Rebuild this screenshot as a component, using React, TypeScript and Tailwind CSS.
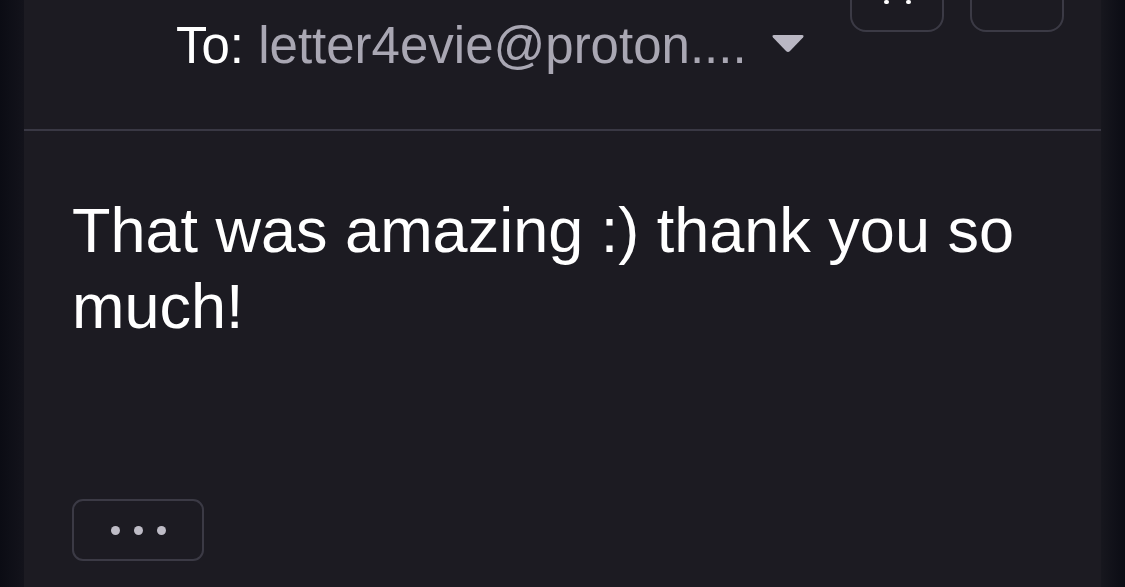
export default function App() {
  return (
    <div
      className="flex h-[587px] w-[1125px] overflow-hidden bg-[#0d0e16] text-white"
      style={{ fontFamily: '"Liberation Sans", Arial, sans-serif' }}
    >
      <div className="w-[24px] shrink-0 bg-gradient-to-r from-[#0b0c14] to-[#13131b]" />

      <div className="flex w-[1077px] shrink-0 flex-col bg-[#1c1b22]">
        <div className="flex h-[131px] shrink-0 items-start border-b-2 border-[#393844]">
          <div className="flex flex-1 items-center pl-[152px] pt-[20px]">
            <span className="text-[51px] leading-[51px] whitespace-nowrap">
              To: <span className="text-[#a9a7b3]">letter4evie@proton....</span>
            </span>
            <svg width="34" height="19" viewBox="0 0 34 19" className="ml-[24px] mt-[-4px]">
              <path d="M3 1 H31 Q33.5 1 32 3.5 L19 17 Q17 19 15 17 L2 3.5 Q0.5 1 3 1 Z" fill="#b9b7c3" />
            </svg>
          </div>
          <div className="mr-[37px] mt-[-40px] flex gap-[26px]">
            <div className="flex h-[72px] w-[94px] justify-center gap-[17px] rounded-[16px] border-2 border-[#3b3a45] pt-[38px]">
              <div className="h-[4px] w-[5px] rounded-full bg-white" />
              <div className="h-[4px] w-[5px] rounded-full bg-white" />
            </div>
            <div className="h-[72px] w-[94px] rounded-[16px] border-2 border-[#3b3a45]" />
          </div>
        </div>

        <div className="flex flex-col px-[48px] pt-[61px]">
          <p className="text-[63px] leading-[76px] text-white">That was amazing :) thank you so much!</p>
          <div className="mt-[155px] flex h-[62px] w-[132px] items-center justify-center gap-[14px] rounded-[11px] border-2 border-[#3b3a45]">
            <div className="h-[9px] w-[9px] rounded-full bg-[#bebcc6]" />
            <div className="h-[9px] w-[9px] rounded-full bg-[#bebcc6]" />
            <div className="h-[9px] w-[9px] rounded-full bg-[#bebcc6]" />
          </div>
        </div>
      </div>

      <div className="w-[24px] shrink-0 bg-gradient-to-r from-[#17171e] to-[#0b0c14]" />
    </div>
  )
}
